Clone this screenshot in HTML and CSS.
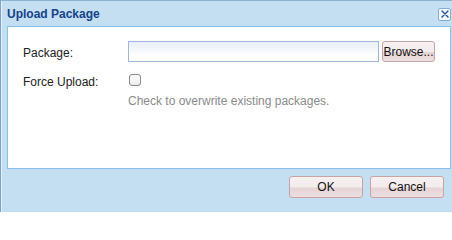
FILE: index.html
```html
<!DOCTYPE html>
<html>
<head>
<meta charset="utf-8">
<link rel="stylesheet" href="styles.css">
</head>
<body>
<div class="window">
  <div class="header">
    <span class="title">Upload Package</span>
    <span class="close"><svg width="10" height="10" viewBox="0 0 10 10"><path d="M2 2 L8 8 M8 2 L2 8" stroke="#1f4f9c" stroke-width="1.4" stroke-linecap="round"/></svg></span>
  </div>
  <div class="body">
    <div class="form">
      <div class="label">Package:</div>
      <div class="field">
        <div class="input"></div>
        <div class="btn browse">Browse...</div>
      </div>
      <div class="label row2">Force Upload:</div>
      <div class="field row2"><span class="checkbox"></span></div>
      <div></div>
      <div class="hint">Check to overwrite existing packages.</div>
    </div>
  </div>
  <div class="footer">
    <div class="btn big">OK</div>
    <div class="btn big">Cancel</div>
  </div>
</div>
</body>
</html>
```
FILE: styles.css
```css
html, body {
  margin: 0;
  padding: 0;
  overflow: hidden;
  background: #ffffff;
}
.window {
  width: 451px;
  height: 211px;
  border-left: 1px solid #7ba3c9;
  border-top: 1px solid #8fb1d2;
  box-shadow: inset 1px 0 0 #e4f0fa;
  background: #c3dff1;
  font-family: "Liberation Sans", Arial, sans-serif;
  font-size: 12px;
  color: #222;
  display: flex;
  flex-direction: column;
}
.header {
  height: 25px;
  display: flex;
  align-items: center;
  justify-content: space-between;
  padding-left: 6px;
  padding-right: 1px;
}
.title {
  font-weight: bold;
  color: #15428b;
  font-size: 12px;
  padding-top: 1px;
}
.close {
  width: 11px;
  height: 11px;
  border: 1px solid #82aedb;
  border-radius: 2px;
  background: #f4f9fe;
  display: flex;
  align-items: center;
  justify-content: center;
  margin-top: 1px;
}
.body {
  margin-left: 6px;
  margin-right: 1px;
  height: 143px;
  background: #fff;
  border: 1px solid #88bfee;
  box-sizing: border-box;
  padding: 14px 0 0 15px;
}
.form {
  display: grid;
  grid-template-columns: 105px auto;
  row-gap: 6px;
  align-items: center;
  justify-content: start;
}
.label {
  color: #222;
  padding-top: 2px;
}
.field {
  display: flex;
  align-items: center;
  gap: 3px;
}
.row2 {
  height: 22px;
}
.label.row2 {
  box-sizing: border-box;
  line-height: 20px;
  padding-top: 4px;
}
.input {
  width: 249px;
  height: 19px;
  border: 1px solid #a2b7e0;
  background: linear-gradient(#e6eef7, #ffffff 70%);
}
.btn {
  box-sizing: border-box;
  border: 1px solid #c8a3a5;
  border-radius: 3px;
  background: linear-gradient(#f7f0f0 0%, #f4ecec 50%, #e6d3d4 55%, #ece0e0 100%);
  display: flex;
  align-items: center;
  justify-content: center;
  color: #111;
  font-size: 12px;
}
.browse {
  width: 53px;
  height: 21px;
}
.checkbox {
  width: 10px;
  height: 10px;
  margin-left: 1px;
  margin-top: 1px;
  border: 1px solid #8a8a8a;
  border-radius: 3px;
  background: linear-gradient(#ffffff, #ececec);
}
.hint {
  color: #8a8a8a;
  margin-top: -2px;
  line-height: 14px;
}
.footer {
  display: flex;
  justify-content: flex-end;
  gap: 7px;
  padding: 7px 8px 0 0;
}
.big {
  width: 74px;
  height: 22px;
}
```
